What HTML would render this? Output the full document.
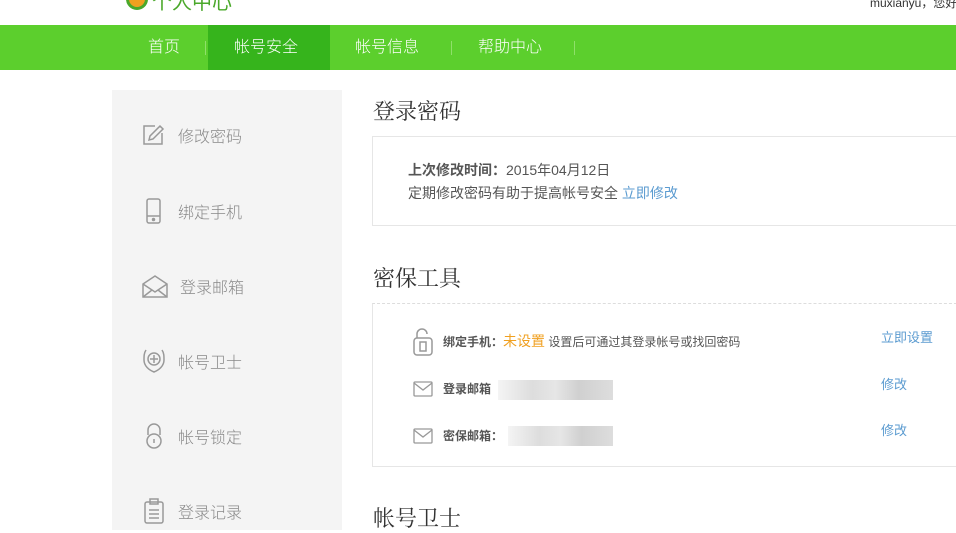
<!DOCTYPE html>
<html><head><meta charset="utf-8"><style>
*{margin:0;padding:0;box-sizing:border-box}
body{width:956px;height:526px;overflow:hidden;background:#fff;font-family:"Liberation Sans","Noto Sans CJK SC","WenQuanYi Zen Hei",sans-serif;position:relative;color:#333}
.abs{position:absolute}
.nav{left:0;top:25px;width:956px;height:45px;background:#5ccf2d}
.nav span{position:absolute;top:0;height:45px;line-height:45px;color:#fff;font-size:16px;font-weight:300}
.sep{position:absolute;top:16px;width:1px;height:14px;background:#8fe06a}
.side{left:112px;top:90px;width:230px;height:440px;background:#f4f4f4}
.item{position:absolute;left:30px;height:30px;display:flex;align-items:center;color:#888;font-size:16px;font-weight:300}
.item svg{margin-right:12px}
h2{position:absolute;left:373px;font-weight:normal;font-size:22px;color:#333;font-family:"Liberation Serif","Noto Serif CJK SC",serif}
.box{position:absolute;left:372px;width:600px;border:1px solid #e6e6e6}
.blur{position:absolute;height:20px;background:linear-gradient(90deg,#f4f4f4,#ddd 30%,#e6e6e6 50%,#d0d0d0 70%,#ddd)}
.link{color:#5b9bd0}
</style></head><body>
<div class="abs" style="left:126px;top:-12px;width:22px;height:22px;border-radius:50%;background:#f0a020;border:3px solid #4aa82a"></div>
<div class="abs" style="left:152px;top:-14px;font-size:20px;color:#4aa82a">个人中心</div>
<div class="abs" style="left:300px;top:-10px;font-size:16px;color:#7fc96a;font-style:italic">ˇˇ ˇˇ ˇ ˇˇ ˇˇ</div>
<div class="abs" style="left:870px;top:-6px;font-size:12px;color:#333;white-space:nowrap">muxianyu，您好</div>
<div class="abs nav">
<div class="abs" style="left:208px;top:0;width:122px;height:45px;background:#36b41c"></div>
<span style="left:148px">首页</span>
<div class="sep" style="left:205px"></div>
<span style="left:234px">帐号安全</span>
<span style="left:355px">帐号信息</span>
<div class="sep" style="left:451px"></div>
<span style="left:478px">帮助中心</span>
<div class="sep" style="left:574px"></div>
</div>
<div class="abs side">
<div class="item" style="top:30px"><svg width="24" height="24" viewBox="0 0 24 24" fill="none" stroke="#999" stroke-width="1.5"><path d="M20 10v11H2V3h11"/><path d="M7 17l1-4 10-10 3 3-10 10z"/></svg>修改密码</div>
<div class="item" style="top:106px"><svg width="24" height="26" viewBox="0 0 24 26" fill="none" stroke="#999" stroke-width="1.5"><rect x="5" y="1" width="13" height="24" rx="2"/><path d="M5 18h13"/><circle cx="11.5" cy="21.5" r="1" fill="#999"/></svg>绑定手机</div>
<div class="item" style="top:181px"><svg width="26" height="24" viewBox="0 0 26 24" fill="none" stroke="#999" stroke-width="1.5"><path d="M1 10L13 2l12 8v13H1z"/><path d="M1 10l12 8 12-8M1 23l9-7M25 23l-9-7"/></svg>登录邮箱</div>
<div class="item" style="top:256px"><svg width="24" height="26" viewBox="0 0 24 26" fill="none" stroke="#999" stroke-width="1.5"><path d="M4 2C2 5 2 8 2 12c0 6 5 10 10 12 5-2 10-6 10-12 0-4 0-7-2-10"/><circle cx="12" cy="11" r="6"/><path d="M12 7v8M8 11h8"/></svg>帐号卫士</div>
<div class="item" style="top:331px"><svg width="24" height="26" viewBox="0 0 24 26" fill="none" stroke="#999" stroke-width="1.5"><path d="M6 12V7a6 6 0 0 1 12 0v5"/><circle cx="12" cy="18" r="7"/><path d="M12 16v4"/></svg>帐号锁定</div>
<div class="item" style="top:406px"><svg width="24" height="26" viewBox="0 0 24 26" fill="none" stroke="#999" stroke-width="1.5"><rect x="3" y="4" width="18" height="21" rx="2"/><rect x="8" y="1" width="8" height="5"/><path d="M7 12h10M7 16h10M7 20h10"/></svg>登录记录</div>
</div>
<h2 style="top:95px">登录密码</h2>
<div class="box" style="top:136px;height:90px">
<div class="abs" style="left:35px;top:23px;font-size:14px;color:#555"><b>上次修改时间：</b>2015年04月12日</div>
<div class="abs" style="left:35px;top:46px;font-size:14px;color:#555">定期修改密码有助于提高帐号安全 <span class="link">立即修改</span></div>
</div>
<h2 style="top:262px">密保工具</h2>
<div class="box" style="top:303px;height:164px;border-top:1px dashed #ddd">
<svg class="abs" style="left:40px;top:24px" width="20" height="28" viewBox="0 0 20 28" fill="none" stroke="#999" stroke-width="1.5"><path d="M4 10V6a5 5 0 0 1 10 0"/><rect x="1" y="10" width="18" height="17" rx="3"/><rect x="7" y="14" width="6" height="9"/></svg>
<div class="abs" style="left:70px;top:27px;font-size:12px;color:#555"><b>绑定手机：</b><span style="color:#f0a020;font-size:14px">未设置</span> 设置后可通过其登录帐号或找回密码</div>
<div class="abs link" style="left:508px;top:23px;font-size:13px">立即设置</div>
<svg class="abs" style="left:40px;top:77px" width="20" height="16" viewBox="0 0 20 16" fill="none" stroke="#999" stroke-width="1.3"><rect x="1" y="1" width="18" height="14" rx="1"/><path d="M1 2l9 7 9-7"/></svg>
<div class="abs" style="left:70px;top:76px;font-size:12px;color:#555;font-weight:bold">登录邮箱</div>
<div class="blur" style="left:125px;top:76px;width:115px"></div>
<div class="abs link" style="left:508px;top:70px;font-size:13px">修改</div>
<svg class="abs" style="left:40px;top:124px" width="20" height="16" viewBox="0 0 20 16" fill="none" stroke="#999" stroke-width="1.3"><rect x="1" y="1" width="18" height="14" rx="1"/><path d="M1 2l9 7 9-7"/></svg>
<div class="abs" style="left:70px;top:123px;font-size:12px;color:#555;font-weight:bold">密保邮箱：</div>
<div class="blur" style="left:135px;top:122px;width:105px"></div>
<div class="abs link" style="left:508px;top:116px;font-size:13px">修改</div>
</div>
<h2 style="top:502px">帐号卫士</h2>
</body></html>
